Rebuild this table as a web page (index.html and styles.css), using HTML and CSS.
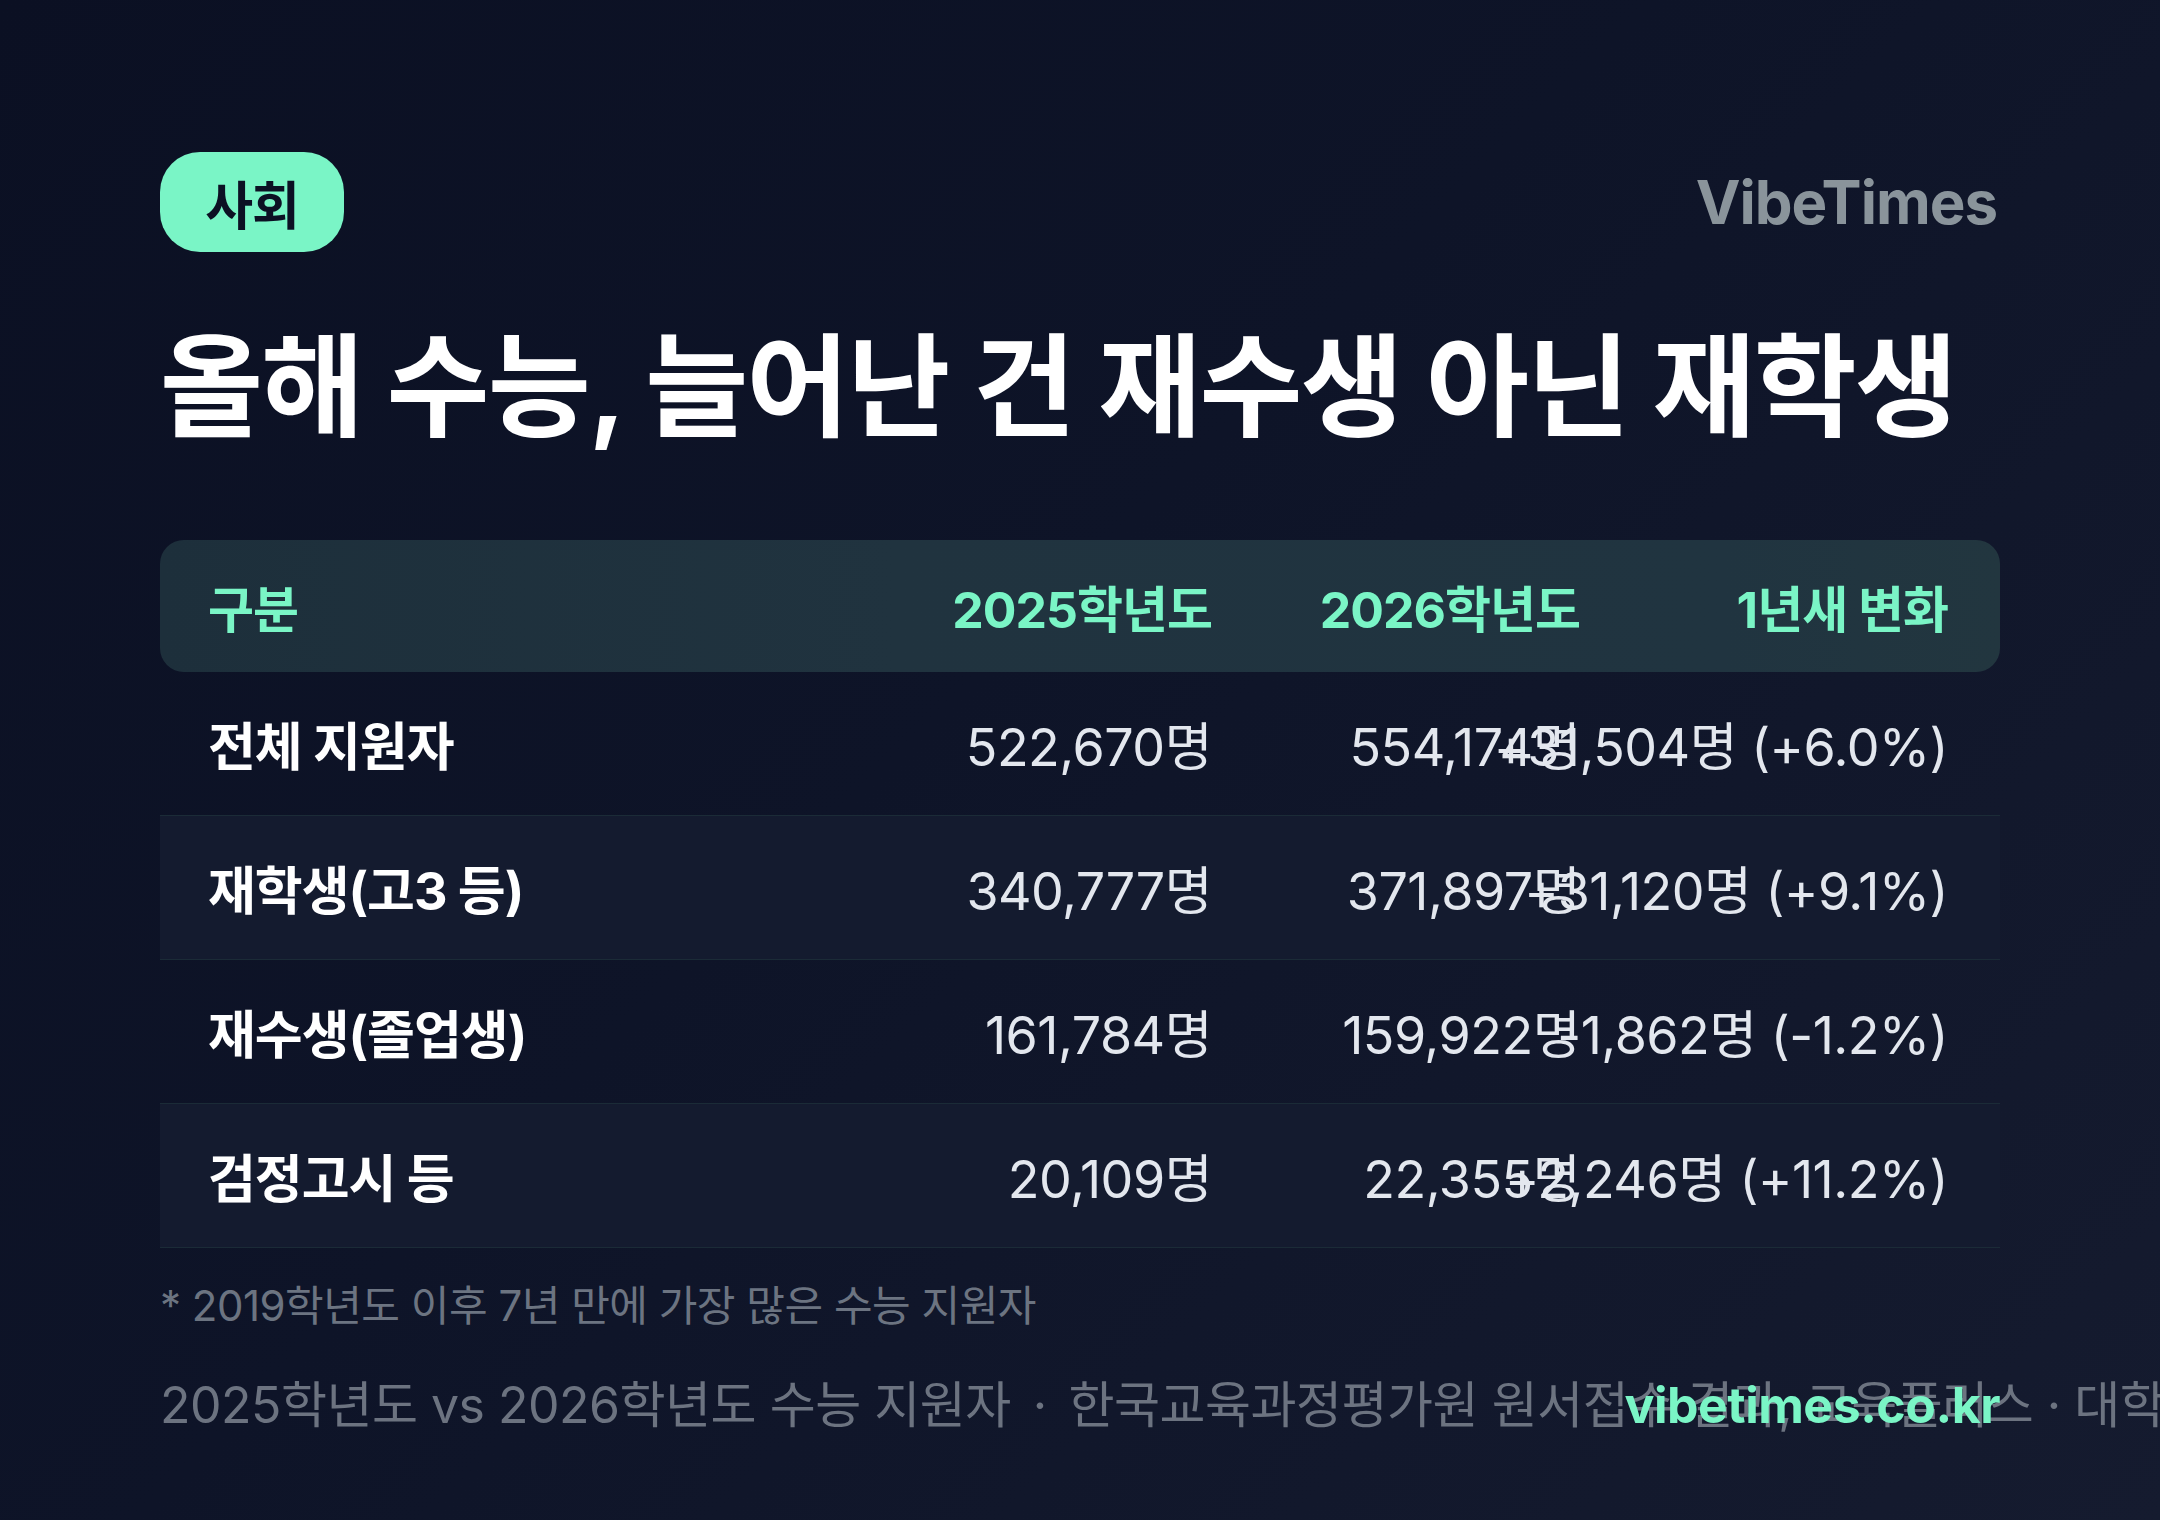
FILE: index.html
```html
<!DOCTYPE html>
<html lang="ko">
<head>
<meta charset="utf-8">
<title>VibeTimes</title>
<link rel="stylesheet" href="styles.css">
</head>
<body>
<div class="page">
  <header class="top">
    <span class="badge">사회</span>
    <span class="brand">VibeTimes</span>
  </header>
  <h1 class="title">올해 수능, 늘어난 건 재수생 아닌 재학생</h1>
  <div class="table">
    <div class="row head">
      <div class="cell label">구분</div>
      <div class="cell num">2025학년도</div>
      <div class="cell num">2026학년도</div>
      <div class="cell num">1년새 변화</div>
    </div>
    <div class="row">
      <div class="cell label">전체 지원자</div>
      <div class="cell num">522,670명</div>
      <div class="cell num">554,174명</div>
      <div class="cell num">+31,504명 (+6.0%)</div>
    </div>
    <div class="row alt">
      <div class="cell label">재학생(고3 등)</div>
      <div class="cell num">340,777명</div>
      <div class="cell num">371,897명</div>
      <div class="cell num">+31,120명 (+9.1%)</div>
    </div>
    <div class="row">
      <div class="cell label">재수생(졸업생)</div>
      <div class="cell num">161,784명</div>
      <div class="cell num">159,922명</div>
      <div class="cell num">-1,862명 (-1.2%)</div>
    </div>
    <div class="row alt">
      <div class="cell label">검정고시 등</div>
      <div class="cell num">20,109명</div>
      <div class="cell num">22,355명</div>
      <div class="cell num">+2,246명 (+11.2%)</div>
    </div>
  </div>
  <p class="note">* 2019학년도 이후 7년 만에 가장 많은 수능 지원자</p>
  <footer class="foot">
    <span class="source">2025학년도 vs 2026학년도 수능 지원자<span class="sep">·</span>한국교육과정평가원 원서접수 결과, 교육플러스 · 대학저널</span>
    <span class="url">vibetimes.co.kr</span>
  </footer>
</div>
</body>
</html>
```
FILE: styles.css
```css
html, body {
  margin: 0;
  padding: 0;
}
body {
  width: 2160px;
  height: 1520px;
  overflow: hidden;
  background: linear-gradient(135deg, #0b1023 0%, #0e1428 45%, #151b2f 100%);
  font-family: Inter, "Noto Sans CJK KR", sans-serif;
  color: #ffffff;
}
.page {
  padding: 152px 160px 0 160px;
  display: flex;
  flex-direction: column;
}
.top {
  display: flex;
  justify-content: space-between;
  align-items: center;
  height: 100px;
}
.badge {
  display: flex;
  align-items: center;
  justify-content: center;
  height: 100px;
  width: 184px;
  box-sizing: border-box;
  border-radius: 40px;
  background: #7af5c6;
  color: #0c1124;
  font-weight: 700;
  font-size: 52px;
  letter-spacing: -1px;
}
.brand {
  font-weight: 700;
  font-size: 60px;
  color: #8a949b;
  letter-spacing: -1px;
  margin-right: 3px;
}
.title {
  margin: 68px 0 0 0;
  font-size: 112px;
  line-height: 1.2;
  font-weight: 700;
  letter-spacing: -2px;
  color: #ffffff;
}
.table {
  margin-top: 86px;
  display: flex;
  flex-direction: column;
}
.row {
  display: grid;
  grid-template-columns: 1fr 336px 336px 336px;
  column-gap: 32px;
  align-items: center;
  padding: 0 52px 0 48px;
  height: 143px;
  border-bottom: 1px solid #1b2b37;
}
.row.head {
  height: 132px;
  border-bottom: none;
  border-radius: 24px;
  background: linear-gradient(90deg, #1d2f3b 0%, #20333f 40%, #203440 85%, #22363f 100%);
}
.row.alt {
  background: #141b2f;
}
.cell {
  white-space: nowrap;
  font-size: 52px;
}
.cell.label {
  font-weight: 700;
  color: #ffffff;
  letter-spacing: -1px;
}
.cell.num {
  justify-self: end;
  color: #e3e7ee;
  font-weight: 400;
  letter-spacing: -0.5px;
}
.row.head .cell {
  font-size: 50px;
  font-weight: 700;
  color: #7af5c6;
  letter-spacing: -1px;
}
.note {
  margin: 24px 0 0 0;
  font-size: 42px;
  color: #6c7481;
  letter-spacing: -0.5px;
}
.foot {
  margin-top: 32px;
  display: flex;
  align-items: baseline;
  justify-content: space-between;
}
.source {
  flex: 1 1 auto;
  min-width: 0;
  white-space: nowrap;
  font-size: 50px;
  color: #6c7380;
  letter-spacing: -0.5px;
}
.sep {
  margin: 0 22px;
}
.url {
  flex: 0 0 auto;
  font-size: 50px;
  font-weight: 700;
  color: #7af5c6;
  letter-spacing: -0.5px;
}
```
